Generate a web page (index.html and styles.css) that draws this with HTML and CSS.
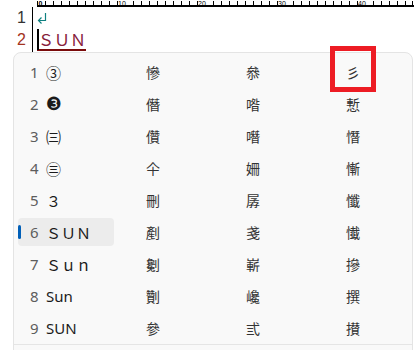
FILE: index.html
```html
<!DOCTYPE html>
<html lang="ja">
<head>
  <meta charset="UTF-8">
  <title>IME</title>
  <link rel="stylesheet" href="styles.css">
</head>
<body>
  <div class="ruler">
    <svg width="414" height="8" viewBox="0 0 414 8">
      <rect x="37" y="5" width="377" height="2" fill="#000"/>
      <g fill="#000">
        <rect x="37" y="1" width="1" height="4"/><rect x="45" y="1" width="1" height="4"/>
        <rect x="53" y="1" width="1" height="4"/><rect x="61" y="1" width="1" height="4"/>
        <rect x="69" y="1" width="1" height="4"/><rect x="77" y="1" width="1" height="4"/>
        <rect x="85" y="1" width="1" height="4"/><rect x="93" y="1" width="1" height="4"/>
        <rect x="101" y="1" width="1" height="4"/><rect x="109" y="1" width="1" height="4"/>
        <rect x="117" y="1" width="1" height="4"/><rect x="125" y="1" width="1" height="4"/>
        <rect x="133" y="1" width="1" height="4"/><rect x="141" y="1" width="1" height="4"/>
        <rect x="149" y="1" width="1" height="4"/><rect x="157" y="1" width="1" height="4"/>
        <rect x="165" y="1" width="1" height="4"/><rect x="173" y="1" width="1" height="4"/>
        <rect x="181" y="1" width="1" height="4"/><rect x="189" y="1" width="1" height="4"/>
        <rect x="197" y="1" width="1" height="4"/><rect x="205" y="1" width="1" height="4"/>
        <rect x="213" y="1" width="1" height="4"/><rect x="221" y="1" width="1" height="4"/>
        <rect x="229" y="1" width="1" height="4"/><rect x="237" y="1" width="1" height="4"/>
        <rect x="245" y="1" width="1" height="4"/><rect x="253" y="1" width="1" height="4"/>
        <rect x="261" y="1" width="1" height="4"/><rect x="269" y="1" width="1" height="4"/>
        <rect x="277" y="1" width="1" height="4"/><rect x="285" y="1" width="1" height="4"/>
        <rect x="293" y="1" width="1" height="4"/><rect x="301" y="1" width="1" height="4"/>
        <rect x="309" y="1" width="1" height="4"/><rect x="317" y="1" width="1" height="4"/>
        <rect x="325" y="1" width="1" height="4"/><rect x="333" y="1" width="1" height="4"/>
        <rect x="341" y="1" width="1" height="4"/><rect x="349" y="1" width="1" height="4"/>
        <rect x="357" y="1" width="1" height="4"/><rect x="365" y="1" width="1" height="4"/>
        <rect x="373" y="1" width="1" height="4"/><rect x="381" y="1" width="1" height="4"/>
        <rect x="389" y="1" width="1" height="4"/><rect x="397" y="1" width="1" height="4"/>
        <rect x="405" y="1" width="1" height="4"/><rect x="412" y="1" width="1" height="4"/>
      </g>
      <g class="ruler-num">
        <rect x="38" y="0" width="7" height="5" fill="#fff"/>
        <text x="38.5" y="6.3" font-weight="bold">0</text>
        <rect x="118" y="0" width="10" height="5" fill="#fff"/>
        <text x="118" y="6.3">10</text>
        <rect x="198" y="0" width="10" height="5" fill="#fff"/>
        <text x="198" y="6.3">20</text>
        <rect x="278" y="0" width="10" height="5" fill="#fff"/>
        <text x="278" y="6.3">30</text>
        <rect x="358" y="0" width="10" height="5" fill="#fff"/>
        <text x="358" y="6.3">40</text>
      </g>
    </svg>
  </div>

  <div class="editor">
    <div class="gutter">
      <div class="ln">1</div>
      <div class="ln ln-cur">2</div>
    </div>
    <div class="lines">
      <div class="line">
        <svg class="ret" width="10" height="12" viewBox="0 0 10 12">
          <path d="M8.5 1 V8.5 H2" fill="none" stroke="#0f8080" stroke-width="1.2"/>
          <path d="M4.5 5.5 L1.5 8.5 L4.5 11.5" fill="none" stroke="#0f8080" stroke-width="1.2"/>
        </svg>
      </div>
      <div class="line"><span class="caret"></span><span class="comp">ＳＵＮ</span></div>
    </div>
  </div>

  <div class="popup">
    <div class="row">
      <div class="cand"><span class="num">1</span><span class="txt">③</span></div>
      <div class="kanji">慘</div><div class="kanji">叅</div><div class="kanji">彡</div>
    </div>
    <div class="row">
      <div class="cand"><span class="num">2</span><span class="txt dingbat">❸</span></div>
      <div class="kanji">僭</div><div class="kanji">喒</div><div class="kanji">慙</div>
    </div>
    <div class="row">
      <div class="cand"><span class="num">3</span><span class="txt">㈢</span></div>
      <div class="kanji">儹</div><div class="kanji">噆</div><div class="kanji">憯</div>
    </div>
    <div class="row">
      <div class="cand"><span class="num">4</span><span class="txt">㊂</span></div>
      <div class="kanji">仐</div><div class="kanji">姍</div><div class="kanji">慚</div>
    </div>
    <div class="row">
      <div class="cand"><span class="num">5</span><span class="txt">３</span></div>
      <div class="kanji">刪</div><div class="kanji">孱</div><div class="kanji">懺</div>
    </div>
    <div class="row">
      <div class="cand selected"><span class="num">6</span><span class="txt">ＳＵＮ</span></div>
      <div class="kanji">剷</div><div class="kanji">戔</div><div class="kanji">懴</div>
    </div>
    <div class="row">
      <div class="cand"><span class="num">7</span><span class="txt">Ｓｕｎ</span></div>
      <div class="kanji">劖</div><div class="kanji">嶄</div><div class="kanji">摻</div>
    </div>
    <div class="row">
      <div class="cand"><span class="num">8</span><span class="txt">Sun</span></div>
      <div class="kanji">劗</div><div class="kanji">巉</div><div class="kanji">撰</div>
    </div>
    <div class="row">
      <div class="cand"><span class="num">9</span><span class="txt">SUN</span></div>
      <div class="kanji">參</div><div class="kanji">弎</div><div class="kanji">攅</div>
    </div>
    <div class="footer"></div>
  </div>

  <div class="mark"></div>
</body>
</html>
```

FILE: styles.css
```css
html, body { margin: 0; padding: 0; }
body {
  width: 414px;
  height: 350px;
  overflow: hidden;
  background: #fff;
  position: relative;
  font-family: "Noto Sans", "Noto Sans CJK JP", sans-serif;
}

.ruler { height: 7px; }
.ruler svg { display: block; overflow: visible; }
.ruler-num text { font-family: "Liberation Sans", sans-serif; font-size: 7px; fill: #000; }

.editor { display: flex; height: 45px; }
.gutter {
  width: 32px;
  border-right: 1px solid #000;
}
.ln {
  height: 22px;
  line-height: 22px;
  text-align: right;
  padding-right: 6px;
  font-family: "Liberation Sans", sans-serif;
  font-size: 16px;
  color: #333;
}
.ln-cur { color: #a33320; }

.lines { padding-left: 4px; }
.line { height: 22px; display: flex; align-items: center; position: relative; }
.ret { display: block; margin-top: -1px; }
.caret {
  position: absolute;
  left: 0;
  top: 0;
  width: 2px;
  height: 21px;
  background: #000;
}
.comp {
  font-family: "Noto Sans CJK JP", sans-serif;
  font-size: 16px;
  color: #86203a;
  border-bottom: 2px solid #7a0c0c;
  line-height: 19px;
  margin-top: 1px;
  padding-left: 1px;
}

.popup {
  margin-left: 13px;
  width: 400px;
  height: 310px;
  box-sizing: border-box;
  background: #f9f9f9;
  border: 1px solid #e4e4e4;
  border-radius: 8px 8px 0 0;
  padding-top: 3px;
}
.row {
  display: grid;
  grid-template-columns: 128px 100px 100px 1fr;
  height: 32px;
  align-items: center;
  padding-left: 4px;
}
.cand {
  position: relative;
  display: flex;
  align-items: center;
  width: 96px;
  height: 28px;
  padding-left: 12px;
  box-sizing: border-box;
  border-radius: 4px;
}
.cand.selected { background: #ececec; }
.cand.selected::before {
  content: "";
  position: absolute;
  left: 0;
  top: 7px;
  width: 3px;
  height: 14px;
  border-radius: 2px;
  background: #005fb8;
}
.num { width: 16px; font-size: 15px; color: #5d5d5d; }
.txt { font-size: 15px; color: #1b1b1b; }
.dingbat { font-family: "DejaVu Sans", sans-serif; font-size: 18px; line-height: 1; }
.kanji {
  font-family: "Noto Sans CJK JP", sans-serif;
  font-size: 14px;
  color: #333;
}
.footer { border-top: 1px solid #e5e5e5; }

.mark {
  position: absolute;
  left: 330px;
  top: 46px;
  width: 46px;
  height: 46px;
  box-sizing: border-box;
  border: 5px solid #ed1c24;
}
```
